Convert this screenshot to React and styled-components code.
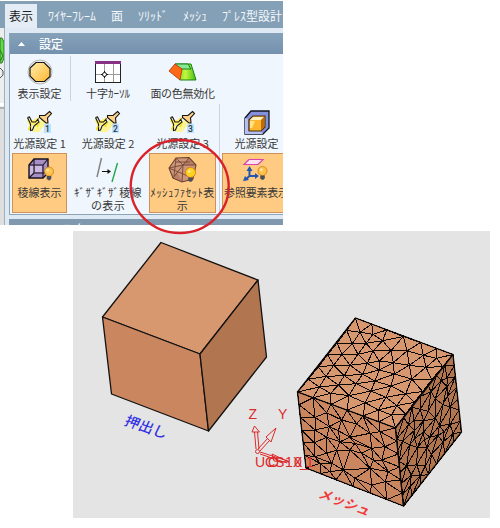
import React from "react";
import styled, { createGlobalStyle } from "styled-components";

const Global = createGlobalStyle`
  * { box-sizing: border-box; }
  body { margin: 0; background: #fff; font-family: "Noto Sans CJK JP", sans-serif; }
`;

const Page = styled.div`
  position: relative;
  width: 500px;
  height: 528px;
  overflow: hidden;
  background: #fff;
`;
const Ribbon = styled.section`
  width: 283px;
  height: 224px;
  margin-top: 1px;
  overflow: hidden;
  background: #dfe9f3;
`;
const Tabs = styled.nav`
  display: flex;
  height: 27px;
  padding: 3px 0 0 5px;
  background: #83a0b7;
`;
const TabSlot = styled.div`
  flex: none;
  width: ${(p) => p.$w}px;
`;
const Tab = styled.div`
  width: ${(p) => p.$w}px;
  height: 24px;
  line-height: 23px;
  padding-left: ${(p) => (p.$active ? 4 : 0)}px;
  font-size: 12px;
  white-space: nowrap;
  color: ${(p) => (p.$active ? "#222" : "#f5f8fb")};
  background: ${(p) => (p.$active ? "#e4edf5" : "transparent")};
`;
const Body = styled.div`
  display: flex;
  height: 197px;
`;
const Side = styled.div`
  flex: none;
  width: 5px;
  border-right: 1px solid #9fb0bd;
  background: #ededed;
`;
const Panels = styled.div`
  flex: none;
  width: 278px;
  padding: 5px 0 0 4px;
`;
const Panel = styled.div`
  height: 182px;
  border: solid #8ba4b8;
  border-width: 0 0 1px 1px;
  background: #eff6fd;
`;
const Header = styled.div`
  display: flex;
  align-items: center;
  gap: 14px;
  height: 21px;
  padding-left: 8px;
  color: #fff;
  font-size: 12px;
  font-weight: 500;
  line-height: 20px;
  background: linear-gradient(#86a2ba, #7491ae);
`;
const Next = styled.div`
  height: 8px;
  margin-top: 4px;
  padding-left: 29px;
  overflow: hidden;
  color: #f4f8fb;
  font-size: 12px;
  line-height: 20px;
  background: #8099ae;
`;
const Grid = styled.div`
  display: grid;
  grid-template-columns: 55px 70px 67px 69px;
  grid-template-rows: 50px 49px 60px;
  column-gap: 6px;
  padding-left: 2px;
`;
const Tool = styled.div`
  display: flex;
  flex-direction: column;
  align-items: center;
  padding-top: 5px;
  border: 1px solid ${(p) => (p.$on ? "#cf925a" : "transparent")};
  background: ${(p) => (p.$on ? "#ffcb83" : "transparent")};
`;
const Label = styled.span`
  height: 13px;
  font-size: 11px;
  line-height: 13px;
  letter-spacing: ${(p) => p.$ls || 0}px;
  white-space: nowrap;
  color: #383838;
`;
const Icon = styled.svg`
  flex: none;
  width: 28px;
  height: 26px;
  margin-bottom: 1px;
  overflow: visible;
`;
const Blank = styled.div``;
const Overlay = styled.svg`
  position: absolute;
  left: 0;
  top: 0;
  z-index: 2;
`;
const Viewport = styled.svg`
  display: block;
  width: 417px;
  height: 287px;
  margin: 6px 0 0 73px;
  background: #e4e4e4;
`;

const Bulb = ({ x, y, r = 4.5, c = "#ffc24d" }) => (
  <g>
    <circle cx={x} cy={y} r={r} fill={c} stroke="#cc7b12" strokeWidth=".8" />
    <circle cx={x - 1.2} cy={y - 1.2} r="1.5" fill="#fff0bd" opacity=".75" />
    <path d={`M${x - 2.3} ${y + r}h4.6v3.3h-1v1h-2.6v-1h-1z`} fill="#4d4d55" />
  </g>
);
const Light = ({ n }) => (
  <Icon viewBox="0 0 28 26">
    <path d="M8 17L18 7L22 11L13 22H6Z" fill="#fff46a" opacity=".75" />
    <rect x="18" y="14" width="7" height="9" fill="#bfe1fb" />
    <path d="M1.500 6.500L4 9H8L12 6L13.500 8L10.500 13L6 15L5.500 19.500L3.500 20V14L1 10Z" transform="translate(0 1)" fill="#fff16b" />
    <path d="M1.500 7.500L3.500 7L6 12H9.500L12.500 8.500M1.500 7.500L4.500 14V20.500L6.500 20L8 16L13 12L11.500 9" fill="none" stroke="#151515" strokeWidth="1.1" />
    <path d="M23.500 1.500L25.500 3.500L21.500 8L22 13H20L13.500 7.500V5.500H19Z" fill="#ffd08a" stroke="#151515" strokeWidth="1.1" />
    <path d="M4 16L2.500 20M13 13L11 17" stroke="#f0dc19" strokeWidth="1.500" />
    <text x="19" y="22" fontFamily="Roboto" fontSize="8.500" fontWeight="500" fill="#24364c">{n}</text>
  </Icon>
);
const icons = {
  display: (
    <Icon viewBox="0 0 28 26">
      <defs><linearGradient id="gold" x1="0" y1="0" x2="1" y2="1"><stop stopColor="#ffeeb0" /><stop offset="1" stopColor="#ffb62e" /></linearGradient></defs>
      <circle cx="14" cy="12" r="12" fill="#e9e9e7" stroke="#aaa" strokeWidth=".8" />
      <path d="M10 2.500H18L24 8.500V16.500L18.500 21.500H9.500L4 16V8Z" fill="url(#gold)" stroke="#171717" strokeWidth="1.2" />
    </Icon>
  ),
  cross: (
    <Icon viewBox="0 0 28 26">
      <rect x="1.500" y="2.500" width="25" height="20" fill="#fff" stroke="#222" />
      <path d="M1 2.500H27" stroke="#863184" strokeWidth="3" />
      <path d="M2 14.500H26M10.500 4V22M19.500 4V22" stroke="#999" />
      <path d="M7 14.500H14M10.500 11V18" stroke="#111" />
      <circle cx="10.500" cy="14.500" r="2" fill="#fff" stroke="#111" />
    </Icon>
  ),
  face: (
    <Icon viewBox="0 0 28 26">
      <defs><linearGradient id="lime"><stop stopColor="#4ad51b" /><stop offset=".5" stopColor="#c4f63e" /><stop offset="1" stopColor="#43bd16" /></linearGradient></defs>
      <path d="M6 4H22L27 20H11Z" fill="url(#lime)" stroke="#168319" />
      <path d="M6 4H19L22 9H11Z" fill="#88e995" stroke="#168319" />
      <path d="M6 4L13 9L11 20L0 11Z" fill="#ff6915" stroke="#bb4611" />
    </Icon>
  ),
  box: (
    <Icon viewBox="0 0 28 26">
      <path d="M2 8L8 1H26V18L20 24H2Z" fill="#8490dc" stroke="#151520" strokeWidth="1.3" />
      <path d="M2 8V24H20L18 21H5V9Z" fill="#b4c0f2" />
      <path d="M6 10L10 6H22V17L18 21H6Z" fill="#ffb42d" stroke="#4c2c09" strokeWidth="1.1" />
      <path d="M7 10L10 7H21L18 10Z" fill="#fff0bd" /><path d="M18 10L21 7V17L18 20Z" fill="#bd6c0b" /><path d="M7 11H12L9 18H7Z" fill="#ffe28a" />
    </Icon>
  ),
  edge: (
    <Icon viewBox="0 0 28 26">
      <path d="M3 6L8 0H22V14L17 19H3Z" fill="#a88fc4" stroke="#171322" strokeWidth="1.400" />
      <path d="M4 7H8V13L4 17ZM9 7H16V13H9Z" fill="#cdb9e0" />
      <path d="M3 6H17V19M17 6L22 0M8 0V14H22M8 14L3 19" fill="none" stroke="#171322" strokeWidth="1.1" />
      <Bulb x={23} y={12.5} />
    </Icon>
  ),
  jag: (
    <Icon viewBox="0 0 28 26">
      <path d="M7.500 -1L3 18" stroke="#858585" strokeWidth="1.500" /><path d="M23.500 4L18 23" stroke="#24a84b" strokeWidth="1.400" />
      <path d="M8 12.500H15" stroke="#111" /><path d="M13.500 10V15L17 12.500Z" fill="#111" />
    </Icon>
  ),
  facet: (
    <Icon viewBox="0 0 28 26">
      <path d="M7 -1L20 -1.500L27 6L24 20L13 23L4 19L0 9Z" fill="#ce9679" stroke="#6b4031" strokeWidth="1.1" />
      <path d="M14 6L20 -1L26 6ZM4 18L8 13L13 22Z" fill="#9f614d" opacity=".45" />
      <path d="M7 -1L14 6L20 -1M0 9L14 6L27 6M13 23L14 6L4 19M0 9L21 18M7 -1L5 17M7 3H21" fill="none" stroke="#704535" strokeWidth=".9" />
      <Bulb x={21.5} y={13.5} r={5} c="#ffd11d" />
    </Icon>
  ),
  ref: (
    <Icon viewBox="0 0 28 26">
      <path d="M6 .500H20L15 5.500H1Z" fill="#ffe2ef" stroke="#dd42ae" strokeWidth="1.2" />
      <path d="M6.500 9V17H14M6.500 17L2 21" fill="none" stroke="#2457ae" strokeWidth="2" />
      <path d="M6.500 7L3.500 12H9.500ZM16 17L12 14V20ZM0 22L2 17L6 21Z" fill="#2457ae" />
      <Bulb x={19.5} y={12} />
    </Icon>
  ),
};

const tools = [
  { icon: icons.display, lines: ["表示設定"] },
  { icon: icons.cross, lines: ["十字ｶｰｿﾙ"] },
  { icon: icons.face, lines: ["面の色無効化"], ls: -0.3 },
  null,
  { icon: <Light n="1" />, lines: ["光源設定 1"] },
  { icon: <Light n="2" />, lines: ["光源設定 2"] },
  { icon: <Light n="3" />, lines: ["光源設定 3"] },
  { icon: icons.box, lines: ["光源設定"] },
  { icon: icons.edge, lines: ["稜線表示"], on: true },
  { icon: icons.jag, lines: ["ｷﾞｻﾞｷﾞｻﾞ稜線", "の表示"], ls: 0.3 },
  { icon: icons.facet, lines: ["ﾒｯｼｭﾌｧｾｯﾄ表", "示"], on: true, ls: 0.4 },
  { icon: icons.ref, lines: ["参照要素表示"], on: true, ls: -0.2 },
];

const topPoints = [
  355.500,318, 346.700,330.300, 337,343, 327.700,354.700, 318.300,367, 308.300,379.300, 297.500,392,
  360,332.300, 352.300,343.700, 342,354.300, 333.700,365.300, 326,376.300, 319.300,387,
  373,334.300, 366,343.300, 358,354.300, 350,365.300, 344.300,375.700, 338.300,385, 330.700,393.300,
  371.700,324, 386.700,330, 382.700,340.700, 373,351, 367.300,363.300, 362.700,374.300, 356,383.700, 349,395.700,
  379.300,361, 379.300,370, 375,381, 371,391, 365.300,402.700, 403.300,336.500, 420.700,342.500, 436.700,348.500, 453,354.500,
  391,350.700, 407,351, 423.300,355.300, 436.700,358.300, 393.300,362.700, 409.300,365.300, 426,367.300, 394.300,374,
  411.700,379, 391,386, 405.700,393.700, 386,397.300, 396.700,405.500, 442.700,366.700, 431.700,379.800, 422.700,391.500, 414.300,402.500, 405.700,414,
  395.500,428, 378.300,410, 391.700,415, 313,397.700, 331,404.300, 347,410.200, 363,416, 379,421.900,
];
const leftPoints = [
  297.500,392, 299,404.700, 300.300,417.300, 301.700,430, 303.200,442.700, 304.600,455.300, 306,468,
  313,397.700, 331,404.300, 347,410.200, 363,416, 379,421.900, 395.500,428,
  315,417.300, 315,430, 314.300,442.700, 326.700,412.700, 329.300,426.700, 341.700,420, 326.700,437.300, 338.300,430.700,
  340,441.700, 350,437.300, 356.700,424, 355,443.300, 370,433.300, 371.700,448.300, 380,431.700, 385,446.700,
  373.300,460, 361.700,453.300, 350,450, 336.700,450, 326.700,453.300, 315,456.700, 331.700,463.300, 343.300,470,
  355,478.300, 330,471.700, 370,468.300, 381.700,460, 388.300,471.700, 385,481.700, 371.700,485, 320,463.300,
  397,441, 398.300,454, 399.700,467, 401,480, 402.300,493, 403.500,506, 320,473.500, 336,479.800, 353,486.500, 370,493, 387,499.600,
];

// Nodes of the right face, with slightly irregular interior positions.
const sidePoints = () => {
  const out = [];
  const n = 7;
  for (let j = 0; j <= n; j++) {
    for (let i = 0; i <= n; i++) {
      const inner = i > 0 && i < n && j > 0 && j < n;
      const dx = inner ? Math.sin(i * 17.3 + j * 9.1) * 0.042 + (j % 2 ? 0.022 : -0.022) : 0;
      const dy = inner ? Math.sin(i * 7.7 + j * 23.9) * 0.042 : 0;
      const u = i / n + dx;
      const v = j / n + dy;
      out.push(395.5 + 57.5 * u + 8.3 * v, 428 - 73.5 * u + 78 * v);
    }
  }
  return out;
};

// Delaunay edges, evaluated in the plane of the face spanned by a and b.
function meshPath(flat, o, a, b) {
  const pts = [];
  for (let i = 0; i < flat.length; i += 2) pts.push([flat[i], flat[i + 1]]);
  const det = a[0] * b[1] - a[1] * b[0];
  const uv = pts.map(([x, y], i) => {
    const dx = x - o[0], dy = y - o[1];
    return [(dx * b[1] - dy * b[0]) / det + Math.sin(i * 5) * 1e-5, (dy * a[0] - dx * a[1]) / det + Math.cos(i * 3) * 1e-5];
  });
  const edges = new Set();
  for (let i = 0; i < uv.length; i++) for (let j = i + 1; j < uv.length; j++) for (let k = j + 1; k < uv.length; k++) {
    const [ax, ay] = uv[i], [bx, by] = uv[j], [cx, cy] = uv[k];
    const d = 2 * (ax * (by - cy) + bx * (cy - ay) + cx * (ay - by));
    if (Math.abs(d) < 0.001) continue;
    const aa = ax * ax + ay * ay, bb = bx * bx + by * by, cc = cx * cx + cy * cy;
    const x = (aa * (by - cy) + bb * (cy - ay) + cc * (ay - by)) / d;
    const y = (aa * (cx - bx) + bb * (ax - cx) + cc * (bx - ax)) / d;
    const r = (ax - x) ** 2 + (ay - y) ** 2;
    if (uv.some((p, m) => m !== i && m !== j && m !== k && (p[0] - x) ** 2 + (p[1] - y) ** 2 < r - 1e-8)) continue;
    edges.add(`${i},${j}`); edges.add(`${j},${k}`); edges.add(`${i},${k}`);
  }
  return [...edges].map((e) => {
    const [i, j] = e.split(",");
    return `M${pts[i].join(" ")}L${pts[j].join(" ")}`;
  }).join("");
}
const meshes = [
  meshPath(topPoints, [297.5, 392], [98, 36], [58, -74]),
  meshPath(leftPoints, [297.5, 392], [98, 36], [8.5, 76]),
  meshPath(sidePoints(), [395.5, 428], [57.5, -73.5], [8.3, 78]),
].join("");

const Scene = () => (
  <Viewport viewBox="73 231 417 287">
    <g stroke="#111" strokeWidth="1.3" strokeLinejoin="round">
      <path d="M161 242.500L258 280L200 354L102.500 317Z" fill="#d7976f" />
      <path d="M102.500 317L200 354L208.500 431L111.500 394Z" fill="#ca875f" />
      <path d="M200 354L258 280L266.500 357L208.500 431Z" fill="#b17650" />
      <path d="M355.500 318L453 354.500L395.500 428L297.500 392Z" fill="#d7976f" />
      <path d="M297.500 392L395.500 428L403.500 506L306 468Z" fill="#ca875f" />
      <path d="M395.500 428L453 354.500L461.500 432L403.500 506Z" fill="#b17650" />
    </g>
    <path d={meshes} stroke="#0c0806" strokeWidth="1" fill="none" shapeRendering="crispEdges" />
    <text transform="matrix(.92 .32 -.4 .85 123.500 424.500)" fontSize="15" fontWeight="500" fill="#3434e2">押出し</text>
    <text transform="matrix(.9 .34 -.5 .8 317.500 497)" fontSize="14" fontWeight="700" fill="#f13b3b">メッシュ</text>
    <g fill="none" stroke="#df2929" strokeWidth="1">
      <circle cx="257.500" cy="451.500" r="2" />
      <path d="M256 449L254.500 432M259 449L257.500 432M252 432L254.500 426L259.500 432ZM258 449L268 438M260 451L270 440M266 437L276 428L271 442ZM260 452L288 461M260 454L287 463M272 454L289 462L274 461Z" />
    </g>
    <g fill="#dc2929" fontFamily="Liberation Sans" fontSize="14">
      <text x="248.500" y="419">Z</text>
      <text x="278" y="419">Y</text>
      <text x="255 265 275 285 294 300 306" y="467">UCS10_1</text>
      <text x="268" y="467">O</text>
      <text x="293" y="467">X</text>
    </g>
  </Viewport>
);

const tabs = [["表示", 43, true], ["ﾜｲﾔｰﾌﾚｰﾑ", 63], ["面", 27], ["ｿﾘｯﾄﾞ", 45], ["ﾒｯｼｭ", 39], ["ﾌﾟﾚｽ型設計", 62]];

export default function App() {
  return (
    <Page>
      <Global />
      <Ribbon>
        <Tabs>
          {tabs.map(([name, w, active]) => (
            <TabSlot key={name} $w={w}>
              <Tab $w={active ? 32 : w} $active={active}>{name}</Tab>
            </TabSlot>
          ))}
        </Tabs>
        <Body>
          <Side>
            <svg width="4" height="197" viewBox="0 0 4 197">
              <path d="M0 10H2L4 14V30L2 35H0Z" fill="#5ddd43" stroke="#38752e" />
              <path d="M0 22L3 28L0 33" fill="none" stroke="#2a7a22" />
              <path d="M0 40L3 43V47L0 50" fill="#eee" stroke="#555" />
              <path d="M0 76.500H4" stroke="#fff" strokeWidth="3" /><path d="M0 80H4" stroke="#777" />
              <path d="M0 81H4V197H0Z" fill="#dedede" />
            </svg>
          </Side>
          <Panels>
            <Panel>
              <Header>
                <svg width="7" height="4" viewBox="0 0 7 4"><path d="M0 4L3.500 0L7 4Z" fill="#fff" /></svg>
                設定
              </Header>
              <Grid>
                {tools.map((t, i) => t ? (
                  <Tool key={i} $on={t.on}>
                    {t.icon}
                    {t.lines.map((line) => <Label key={line} $ls={t.ls}>{line}</Label>)}
                  </Tool>
                ) : <Blank key={i} />)}
              </Grid>
            </Panel>
            <Next>フィルタ</Next>
          </Panels>
        </Body>
      </Ribbon>
      <Scene />
      <Overlay width="283" height="240">
        <path d="M70.500 56V101M219.500 104V212" stroke="#ccd3da" />
        <ellipse cx="179.700" cy="186.500" rx="49" ry="46.500" fill="none" stroke="#d8232b" strokeWidth="2.400" />
      </Overlay>
    </Page>
  );
}
